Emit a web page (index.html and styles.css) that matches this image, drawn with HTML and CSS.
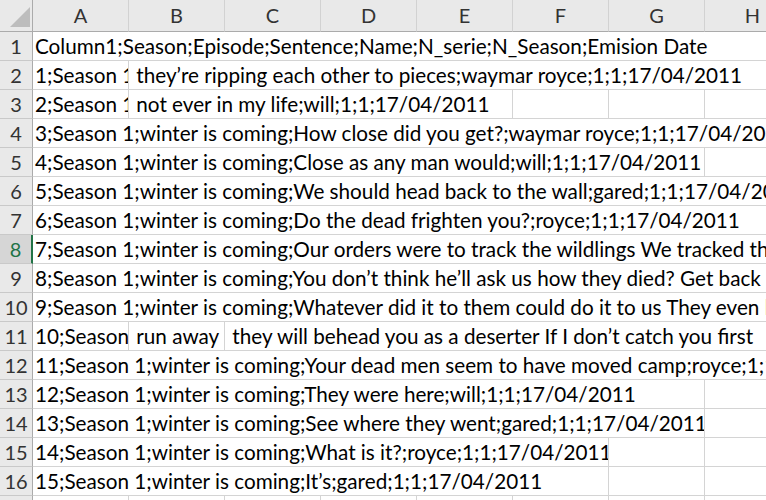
FILE: index.html
```html
<!DOCTYPE html>
<html>
<head>
<meta charset="utf-8">
<link rel="stylesheet" href="styles.css">
</head>
<body>
<div class="sheet">
  <div class="row head">
    <div class="corner"><svg width="33" height="32" viewBox="0 0 33 32"><polygon points="10,27 30,27 30,7" fill="#bdbdbd"/></svg></div>
    <div class="col">A</div><div class="col">B</div><div class="col">C</div><div class="col">D</div><div class="col">E</div><div class="col">F</div><div class="col">G</div><div class="col">H</div>
  </div>

  <div class="row"><div class="rh">1</div><div class="c s8">Column1;Season;Episode;Sentence;Name;N_serie;N_Season;Emision Date</div></div>
  <div class="row"><div class="rh">2</div><div class="c">1;Season 1;winter is coming</div><div class="c s7"> they’re ripping each other to pieces;waymar royce;1;1;17/04/2011</div></div>
  <div class="row"><div class="rh">3</div><div class="c">2;Season 1;winter is coming</div><div class="c s4"> not ever in my life;will;1;1;17/04/2011</div><div class="c"></div><div class="c"></div><div class="c"></div></div>
  <div class="row"><div class="rh">4</div><div class="c s8">3;Season 1;winter is coming;How close did you get?;waymar royce;1;1;17/04/2011</div></div>
  <div class="row"><div class="rh">5</div><div class="c s7">4;Season 1;winter is coming;Close as any man would;will;1;1;17/04/2011</div><div class="c"></div></div>
  <div class="row"><div class="rh">6</div><div class="c s8">5;Season 1;winter is coming;We should head back to the wall;gared;1;1;17/04/2011</div></div>
  <div class="row"><div class="rh">7</div><div class="c s8">6;Season 1;winter is coming;Do the dead frighten you?;royce;1;1;17/04/2011</div></div>
  <div class="row"><div class="rh sel">8</div><div class="c s8">7;Season 1;winter is coming;Our orders were to track the wildlings We tracked them</div></div>
  <div class="row"><div class="rh">9</div><div class="c s8">8;Season 1;winter is coming;You don’t think he’ll ask us how they died? Get back on your horse</div></div>
  <div class="row"><div class="rh">10</div><div class="c s8">9;Season 1;winter is coming;Whatever did it to them could do it to us They even kill the children</div></div>
  <div class="row"><div class="rh">11</div><div class="c">10;Season 1;winter is coming</div><div class="c"> run away</div><div class="c s6"> they will behead you as a deserter If I don’t catch you first</div></div>
  <div class="row"><div class="rh">12</div><div class="c s8">11;Season 1;winter is coming;Your dead men seem to have moved camp;royce;1;1;17/04/2011</div></div>
  <div class="row"><div class="rh">13</div><div class="c s7">12;Season 1;winter is coming;They were here;will;1;1;17/04/2011</div><div class="c"></div></div>
  <div class="row"><div class="rh">14</div><div class="c s7">13;Season 1;winter is coming;See where they went;gared;1;1;17/04/2011</div><div class="c"></div></div>
  <div class="row"><div class="rh">15</div><div class="c s6">14;Season 1;winter is coming;What is it?;royce;1;1;17/04/2011</div><div class="c"></div><div class="c"></div></div>
  <div class="row"><div class="rh">16</div><div class="c s6">15;Season 1;winter is coming;It’s;gared;1;1;17/04/2011</div><div class="c"></div><div class="c"></div></div>
  <div class="row"><div class="rh">17</div><div class="c"></div><div class="c"></div><div class="c"></div><div class="c"></div><div class="c"></div><div class="c"></div><div class="c"></div><div class="c"></div></div>
</div>
</body>
</html>
```
FILE: styles.css
```css
html, body {
  margin: 0;
  padding: 0;
  overflow: hidden;
  background: #ffffff;
}
.sheet {
  width: 801px;
  font-family: "Lato", "Open Sans", sans-serif;
  font-size: 20.7px;
  color: #000000;
}
.row {
  display: grid;
  grid-template-columns: 33px repeat(8, 96px);
  height: 29px;
}
.row.head {
  height: 32px;
}
.corner {
  background: #e9e9e9;
  border-right: 1px solid #ababab;
  border-bottom: 1px solid #ababab;
  box-sizing: border-box;
  overflow: hidden;
  line-height: 0;
}
.corner svg {
  display: block;
}
.col {
  background: #e9e9e9;
  border-right: 1px solid #d2d2d2;
  border-bottom: 1px solid #ababab;
  box-sizing: border-box;
  text-align: center;
  line-height: 31px;
  color: #333333;
  font-size: 20px;
}
.rh {
  background: #e9e9e9;
  border-right: 1px solid #ababab;
  border-bottom: 1px solid #c9c9c9;
  box-sizing: border-box;
  text-align: center;
  line-height: 28px;
  color: #333333;
  font-size: 20px;
}
.rh.sel {
  background: #d6d6d6;
  color: #217346;
  border-right: 2px solid #217346;
}
.c {
  border-right: 1px solid #d4d4d4;
  border-bottom: 1px solid #d4d4d4;
  box-sizing: border-box;
  padding-left: 2px;
  line-height: 29px;
  white-space: pre;
  overflow: hidden;
}
.s4 { grid-column: span 4; }
.s6 { grid-column: span 6; }
.s7 { grid-column: span 7; }
.s8 { grid-column: span 8; }
```
